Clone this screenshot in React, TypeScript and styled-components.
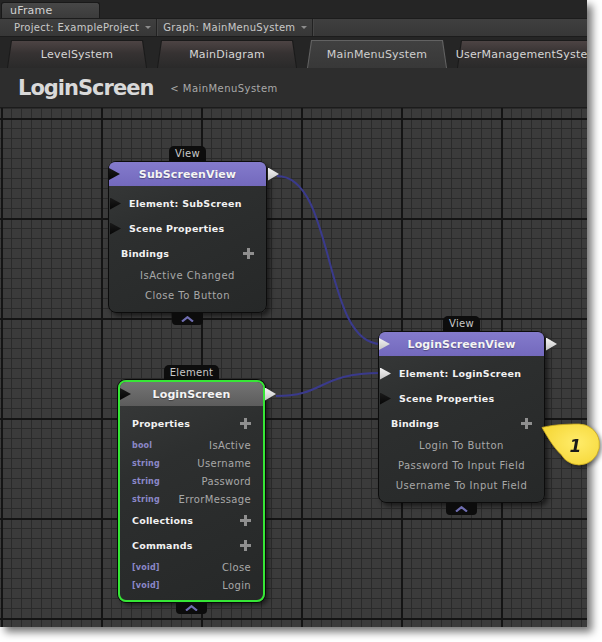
import React from "react";
import styled, { createGlobalStyle } from "styled-components";

const Global = createGlobalStyle`
  *, *::before, *::after { box-sizing: border-box; }
  html, body { margin: 0; padding: 0; background: #ffffff; }
  body { font-family: "DejaVu Sans", "Noto Sans", sans-serif; }
`;

const Page = styled.div`
  position: relative;
  width: 602px;
  height: 642px;
  overflow: hidden;
  background: #ffffff;
`;

const Window = styled.div`
  width: 587px;
  height: 627px;
  display: flex;
  flex-direction: column;
  background: #262626;
  box-shadow: 5px 5px 8px rgba(0, 0, 0, 0.55);
  overflow: hidden;
`;

const TitleStrip = styled.div`
  flex: none;
  height: 18px;
  display: flex;
  align-items: flex-end;
  padding-left: 1px;
  background: #252525;
`;

const WindowTab = styled.div`
  width: 99px;
  height: 16px;
  padding-left: 8px;
  background: linear-gradient(#474747, #3b3b3b);
  border: 1px solid #191919;
  border-bottom: none;
  border-radius: 3px 3px 0 0;
  color: #d2d2d2;
  font-size: 11px;
  letter-spacing: 0.2px;
  line-height: 15px;
`;

const Toolbar = styled.div`
  flex: none;
  height: 19px;
  display: flex;
  align-items: stretch;
  padding-left: 8px;
  background: linear-gradient(#3f3f3f, #373737);
  border-top: 1px solid #1c1c1c;
  border-bottom: 1px solid #1c1c1c;
`;

const Dropdown = styled.div`
  display: flex;
  align-items: center;
  gap: 6px;
  padding: 0 5px 0 6px;
  border-right: 1px solid #222;
  box-shadow: 1px 0 0 #464646;
  color: #c9c9c9;
  font-size: 10px;
  letter-spacing: 0.3px;
  white-space: nowrap;
`;

const DropArrow = styled.span`
  width: 0;
  height: 0;
  border-left: 3px solid transparent;
  border-right: 3px solid transparent;
  border-top: 3px solid #8c8c8c;
`;

const TabRow = styled.div`
  flex: none;
  height: 31px;
  display: flex;
  align-items: flex-end;
  gap: 10px;
  padding-left: 7px;
  background: #252525;
`;

const Tab = styled.div<{ $active?: boolean }>`
  position: relative;
  isolation: isolate;
  flex: none;
  width: 140px;
  height: 28px;
  display: flex;
  align-items: center;
  justify-content: center;
  white-space: nowrap;
  font-size: 11px;
  letter-spacing: 0.2px;
  color: ${(p) => (p.$active ? "#cfcfcf" : "#d6d6d6")};

  &::before,
  &::after {
    content: "";
    position: absolute;
    z-index: -1;
    clip-path: polygon(4px 0, calc(100% - 4px) 0, 100% 100%, 0 100%);
  }
  &::before {
    inset: 0;
    background: ${(p) => (p.$active ? "#626262" : "#1a1a1a")};
  }
  &::after {
    inset: 1px 1px 0 1px;
    background: ${(p) =>
      p.$active
        ? "linear-gradient(#404040, #383838)"
        : "linear-gradient(#4d4444, #363232 45%, #2a2a2a)"};
  }
`;

const Header = styled.div`
  flex: none;
  height: 39px;
  display: flex;
  align-items: center;
  gap: 17px;
  padding-left: 18px;
  background: #2d2d2d;
`;

const PageTitle = styled.h1`
  margin: 0;
  font-size: 21px;
  letter-spacing: -1px;
  font-weight: bold;
  color: #d9d9d9;
`;

const Crumb = styled.span`
  font-size: 10px;
  letter-spacing: 0.45px;
  color: #a9a9a9;
  padding-top: 2px;
`;

const Canvas = styled.div`
  position: relative;
  flex: 1;
  border-top: 1px solid #1b1b1b;
  background-color: #3b3b3b;
  background-image:
    linear-gradient(to bottom, #141414 0 2px, transparent 2px),
    linear-gradient(to right, #141414 0 2px, transparent 2px),
    linear-gradient(to bottom, #2a2a2a 0 1px, transparent 1px),
    linear-gradient(to right, #2a2a2a 0 1px, transparent 1px);
  background-size: 100% 100px, 100px 100%, 100% 10px, 10px 100%;
  background-position: 0 10px, 1px 0, 0 0, 1px 0;
`;

const Links = styled.svg`
  position: absolute;
  inset: 0;
  width: 100%;
  height: 100%;
  pointer-events: none;
`;

const NodeWrap = styled.div<{ $x: number; $y: number; $w: number }>`
  position: absolute;
  left: ${(p) => p.$x}px;
  top: ${(p) => p.$y}px;
  width: ${(p) => p.$w}px;
  display: flex;
  flex-direction: column;
  align-items: center;
`;

const Tag = styled.div`
  height: 15px;
  padding: 0 6px;
  background: #0d0d0d;
  border-radius: 5px 5px 0 0;
  color: #c9c9c9;
  font-size: 10px;
  letter-spacing: 0.3px;
  line-height: 15px;
`;

const Body = styled.div<{ $selected?: boolean }>`
  width: 100%;
  border: ${(p) => (p.$selected ? "2px solid #36e636" : "1px solid #0c0c0c")};
  border-radius: 8px;
  background: linear-gradient(155deg, #383a3a 0%, #2d2f2f 35%, #262828 100%);
  box-shadow: ${(p) =>
    p.$selected
      ? "0 0 0 1px #0a0a0a, 3px 3px 5px rgba(0,0,0,0.55)"
      : "3px 3px 5px rgba(0,0,0,0.55)"};
`;

const NodeHead = styled.div<{ $tone: "view" | "element" }>`
  display: grid;
  grid-template-columns: 14px 1fr 14px;
  align-items: center;
  height: 24px;
  border-radius: 6px 6px 0 0;
  background: ${(p) =>
    p.$tone === "view"
      ? "linear-gradient(#847bcc, #7369bd)"
      : "linear-gradient(#747474, #5c5c5c)"};
`;

const NodeTitle = styled.div`
  text-align: center;
  font-size: 11px;
  font-weight: bold;
  letter-spacing: 0.1px;
  color: #f4f4f4;
  text-shadow: 0 1px 1px rgba(0, 0, 0, 0.35);
  white-space: nowrap;
`;

const Port = styled.span<{ $light?: boolean }>`
  display: block;
  width: 11px;
  height: 12px;
  clip-path: polygon(0 0, 100% 50%, 0 100%);
  background: ${(p) =>
    p.$light ? "linear-gradient(#f4f4f4, #c4c4c4)" : "linear-gradient(#1a1a1a, #050505)"};
`;

const OutPort = styled(Port)`
  justify-self: end;
  margin-right: -13px;
  height: 13px;
`;

const Rows = styled.div`
  padding: 5px 12px 6px 12px;
`;

const PortRow = styled.div`
  display: flex;
  align-items: center;
  gap: 8px;
  height: 25px;
  margin-left: -11px;
  font-size: 9.5px;
  font-weight: bold;
  letter-spacing: 0.25px;
  color: #f2f2f2;
  white-space: nowrap;
`;

const SectionRow = styled.div`
  display: flex;
  align-items: center;
  justify-content: space-between;
  height: 25px;
  font-size: 9.5px;
  font-weight: bold;
  letter-spacing: 0.2px;
  color: #f2f2f2;
`;

const Plus = styled.span`
  position: relative;
  width: 11px;
  height: 11px;
  &::before,
  &::after {
    content: "";
    position: absolute;
    background: #8f8f8f;
  }
  &::before {
    left: 4px;
    top: 0;
    width: 3px;
    height: 11px;
  }
  &::after {
    left: 0;
    top: 4px;
    width: 11px;
    height: 3px;
  }
`;

const ItemRow = styled.div`
  height: 20px;
  line-height: 20px;
  text-align: center;
  font-size: 10px;
  letter-spacing: 0.5px;
  color: #a8a8a8;
  white-space: nowrap;
`;

const TypedRow = styled.div`
  display: flex;
  align-items: center;
  justify-content: space-between;
  height: 18px;
`;

const TypeName = styled.span`
  font-size: 8px;
  font-weight: bold;
  letter-spacing: 0.2px;
  color: #8b88c8;
`;

const Value = styled.span`
  font-size: 10px;
  letter-spacing: 0.35px;
  color: #a8a8a8;
`;

const Collapse = styled.div`
  width: 31px;
  height: 12px;
  display: flex;
  align-items: flex-end;
  justify-content: center;
  padding-bottom: 3px;
  background: #0c0c0c;
  border-radius: 0 0 4px 4px;
`;

const Callout = styled.svg`
  position: absolute;
  left: 536px;
  top: 418px;
  width: 66px;
  height: 52px;
  overflow: visible;
  filter: drop-shadow(2px 2px 2px rgba(0, 0, 0, 0.45));
`;

type Row =
  | { kind: "port"; text: string; light?: boolean }
  | { kind: "section"; text: string }
  | { kind: "item"; text: string }
  | { kind: "typed"; type: string; text: string };

type NodeProps = {
  x: number;
  y: number;
  w: number;
  tag: string;
  title: string;
  tone: "view" | "element";
  inLight?: boolean;
  selected?: boolean;
  rows: Row[];
};

function Node({ x, y, w, tag, title, tone, inLight, selected, rows }: NodeProps) {
  return (
    <NodeWrap $x={x} $y={y} $w={w}>
      <Tag>{tag}</Tag>
      <Body $selected={selected}>
        <NodeHead $tone={tone}>
          <Port $light={inLight} />
          <NodeTitle>{title}</NodeTitle>
          <OutPort $light />
        </NodeHead>
        <Rows>
          {rows.map((r, i) => {
            if (r.kind === "port")
              return (
                <PortRow key={i}>
                  <Port $light={r.light} />
                  {r.text}
                </PortRow>
              );
            if (r.kind === "section")
              return (
                <SectionRow key={i}>
                  {r.text}
                  <Plus />
                </SectionRow>
              );
            if (r.kind === "typed")
              return (
                <TypedRow key={i}>
                  <TypeName>{r.type}</TypeName>
                  <Value>{r.text}</Value>
                </TypedRow>
              );
            return <ItemRow key={i}>{r.text}</ItemRow>;
          })}
        </Rows>
      </Body>
      <Collapse>
        <svg width="13" height="6" viewBox="0 0 13 6">
          <polyline points="1,5.5 6.5,1.2 12,5.5" fill="none" stroke="#6f6db0" strokeWidth="2.2" />
        </svg>
      </Collapse>
    </NodeWrap>
  );
}

const tabs = ["LevelSystem", "MainDiagram", "MainMenuSystem", "UserManagementSystem"];

export default function App() {
  return (
    <Page>
      <Global />
      <Window>
        <TitleStrip>
          <WindowTab>uFrame</WindowTab>
        </TitleStrip>
        <Toolbar>
          <Dropdown>
            Project: ExampleProject
            <DropArrow />
          </Dropdown>
          <Dropdown>
            Graph: MainMenuSystem
            <DropArrow />
          </Dropdown>
        </Toolbar>
        <TabRow>
          {tabs.map((t) => (
            <Tab key={t} $active={t === "MainMenuSystem"}>
              <span>{t}</span>
            </Tab>
          ))}
        </TabRow>
        <Header>
          <PageTitle>LoginScreen</PageTitle>
          <Crumb>&lt; MainMenuSystem</Crumb>
        </Header>
        <Canvas>
          <Links>
            <path d="M 277 68 C 336 68, 322 236, 381 236" fill="none" stroke="#3a3a8c" strokeWidth="2" />
            <path d="M 276 288 C 326 288, 318 265, 381 265" fill="none" stroke="#3a3a8c" strokeWidth="2" />
          </Links>
          <Node
            x={108}
            y={38}
            w={159}
            tag="View"
            title="SubScreenView"
            tone="view"
            rows={[
              { kind: "port", text: "Element: SubScreen" },
              { kind: "port", text: "Scene Properties" },
              { kind: "section", text: "Bindings" },
              { kind: "item", text: "IsActive Changed" },
              { kind: "item", text: "Close To Button" },
            ]}
          />
          <Node
            x={378}
            y={208}
            w={167}
            tag="View"
            title="LoginScreenView"
            tone="view"
            inLight
            rows={[
              { kind: "port", text: "Element: LoginScreen", light: true },
              { kind: "port", text: "Scene Properties" },
              { kind: "section", text: "Bindings" },
              { kind: "item", text: "Login To Button" },
              { kind: "item", text: "Password To Input Field" },
              { kind: "item", text: "Username To Input Field" },
            ]}
          />
          <Node
            x={118}
            y={257}
            w={147}
            tag="Element"
            title="LoginScreen"
            tone="element"
            selected
            rows={[
              { kind: "section", text: "Properties" },
              { kind: "typed", type: "bool", text: "IsActive" },
              { kind: "typed", type: "string", text: "Username" },
              { kind: "typed", type: "string", text: "Password" },
              { kind: "typed", type: "string", text: "ErrorMessage" },
              { kind: "section", text: "Collections" },
              { kind: "section", text: "Commands" },
              { kind: "typed", type: "[void]", text: "Close" },
              { kind: "typed", type: "[void]", text: "Login" },
            ]}
          />
        </Canvas>
      </Window>
      <Callout viewBox="0 0 66 52">
        <defs>
          <radialGradient id="callFill" cx="0.6" cy="0.45" r="0.6">
            <stop offset="0" stopColor="#ffec6a" />
            <stop offset="1" stopColor="#f6d83a" />
          </radialGradient>
        </defs>
        <path
          d="M 6 9.5 C 15 7, 30 6, 43 6 A 20.5 20.5 0 1 1 25.25 36.75 C 18 30, 12 20, 6 9.5 Z"
          fill="url(#callFill)"
          stroke="#c8a81e"
          strokeWidth="0.8"
        />
        <text
          x="39.5"
          y="34"
          textAnchor="middle"
          fontFamily="DejaVu Sans, sans-serif"
          fontStyle="italic"
          fontWeight="bold"
          fontSize="17"
          fill="#1a1a1a"
        >
          1
        </text>
      </Callout>
    </Page>
  );
}
